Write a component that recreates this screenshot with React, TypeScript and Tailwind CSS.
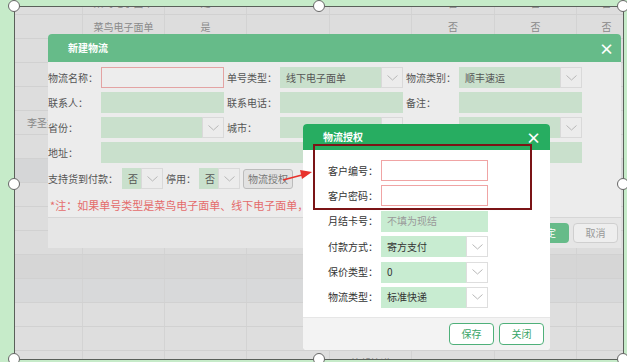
import React from "react";

const cols = [68, 82, 82, 83, 82, 83, 82, 60];

const rows: { bg: string; cells: string[] }[] = [
  { bg: "bg-[#dddddd]", cells: ["", "菜鸟电子面单", "是", "", "", "否", "否", "否"] },
  { bg: "bg-[#dddddd]", cells: ["", "菜鸟电子面单", "是", "", "", "否", "否", "否"] },
  { bg: "bg-[#dddddd]", cells: ["", "", "", "", "", "", "", ""] },
  { bg: "bg-[#dddddd]", cells: ["", "", "", "", "", "", "", ""] },
  { bg: "bg-[#dddddd]", cells: ["", "", "", "", "", "", "", ""] },
  { bg: "bg-[#dddddd]", cells: ["李圣杰", "", "", "", "", "", "", ""] },
  { bg: "bg-[#dddddd]", cells: ["", "", "", "", "", "", "", ""] },
  { bg: "bg-[#d5d6d7]", cells: ["", "", "", "", "", "", "", ""] },
  { bg: "bg-[#dddddd]", cells: ["", "", "", "", "", "", "", ""] },
  { bg: "bg-[#dddddd]", cells: ["", "", "", "", "", "", "", ""] },
  { bg: "bg-[#dcdcdc]", cells: ["", "", "", "", "", "", "", ""] },
  { bg: "bg-[#d6d6d6]", cells: ["", "", "", "", "", "", "", ""] },
  { bg: "bg-[#d8d9da]", cells: ["", "", "", "", "", "", "", ""] },
  { bg: "bg-[#dedede]", cells: ["", "", "", "", "", "", "", ""] },
  { bg: "bg-[#dedede]", cells: ["", "", "", "", "", "", "", ""] },
  { bg: "bg-[#dedede]", cells: ["", "", "", "", "德邦快递", "", "", ""] },
];

function Chev() {
  return (
    <svg width="11" height="6" viewBox="0 0 11 6">
      <polyline points="0.5,0.5 5.5,5 10.5,0.5" fill="none" stroke="#b8b8b8" strokeWidth="1" />
    </svg>
  );
}

// greyed dialog controls
function GInput({ w = 123, red = false }: { w?: number; red?: boolean }) {
  return red ? (
    <div className="h-[21px] border border-[#e3a3a3] bg-[#ededed]" style={{ width: w }} />
  ) : (
    <div className="h-[21px] bg-[#c9e0cc]" style={{ width: w }} />
  );
}

function GSelect({ v = "", w = 123 }: { v?: string; w?: number }) {
  return (
    <div className="flex h-[21px]" style={{ width: w }}>
      <div className="flex flex-1 items-center whitespace-nowrap bg-[#c9e0cc] pl-[6px] text-[#555]">{v}</div>
      <div className="flex w-[22px] items-center justify-center border border-[#d9d9d9] bg-[#ececec]">
        <Chev />
      </div>
    </div>
  );
}

function GLabel({ t, w = 50 }: { t: string; w?: number }) {
  return (
    <div className="shrink-0 whitespace-nowrap text-[#555]" style={{ width: w }}>
      {t}
    </div>
  );
}

// bright dialog controls
function Field({ label, children }: { label: string; children: React.ReactNode }) {
  return (
    <div className="flex h-[21px] items-center">
      <div className="w-[53px] shrink-0 whitespace-nowrap text-[#333]">{label}</div>
      {children}
    </div>
  );
}

function BSelect({ v }: { v: string }) {
  return (
    <div className="flex h-[21px] w-[107px]">
      <div className="flex flex-1 items-center bg-[#c8ecd1] pl-[6px] text-[#333]">{v}</div>
      <div className="flex w-[22px] items-center justify-center border border-[#dedede] bg-white">
        <Chev />
      </div>
    </div>
  );
}

function Handle({ x, y }: { x: number; y: number }) {
  return (
    <div
      className="absolute h-[12px] w-[12px] rounded-full border border-[#666] bg-white"
      style={{ left: x - 6, top: y - 6 }}
    />
  );
}

export default function App() {
  return (
    <div className="relative h-[362px] w-[627px] overflow-hidden bg-[#c6ebc9] font-['Noto_Sans_CJK_SC',sans-serif] text-[10px] leading-none">
      {/* framed screenshot with grey table */}
      <div className="absolute left-[14px] top-[6px] h-[354px] w-[610px] overflow-hidden border border-[#5a605a] bg-[#dddddd]">
        <div className="-mt-[16px] flex flex-col">
          {rows.map((r, i) => (
            <div key={i} className={`flex h-[24px] border-b border-[#d1d1d1] ${r.bg}`}>
              {r.cells.map((c, j) => (
                <div
                  key={j}
                  className={`flex shrink-0 items-center whitespace-nowrap border-r border-[#d3d3d3] text-[#8a8a8a] ${
                    j === 0 ? "justify-start pl-[12px]" : "justify-center"
                  }`}
                  style={{ width: cols[j] }}
                >
                  {c}
                </div>
              ))}
            </div>
          ))}
        </div>
      </div>

      {/* 新建物流 dialog */}
      <div className="absolute left-[48px] top-[34px] flex w-[573px] flex-col overflow-hidden rounded-t-[4px] bg-[#ececec]">
        <div className="flex h-[28px] items-center justify-between bg-[#66bb89] pl-[20px] pr-[7px] text-white">
          <span className="font-bold">新建物流</span>
          <span className="text-[15px] font-bold">×</span>
        </div>
        <div className="flex h-[155px] flex-col gap-[4px] pt-[5px]">
          <div className="flex items-center gap-[3px]">
            <GLabel t="物流名称：" />
            <GInput red />
            <GLabel t="单号类型：" />
            <GSelect v="线下电子面单" />
            <GLabel t="物流类别：" />
            <GSelect v="顺丰速运" />
          </div>
          <div className="flex items-center gap-[3px]">
            <GLabel t="联系人：" />
            <GInput />
            <GLabel t="联系电话：" />
            <GInput />
            <GLabel t="备注：" />
            <GInput />
          </div>
          <div className="flex items-center gap-[3px]">
            <GLabel t="省份：" />
            <GSelect />
            <GLabel t="城市：" />
            <GSelect />
            <GLabel t="" />
            <GSelect />
          </div>
          <div className="flex items-center gap-[3px]">
            <GLabel t="地址：" />
            <GInput w={481} />
          </div>
          <div className="mt-[1px] flex items-center gap-[3px]">
            <GLabel t="支持货到付款：" w={71} />
            <GSelect v="否" w={41} />
            <GLabel t="停用：" w={30} />
            <GSelect v="否" w={41} />
            <div className="flex h-[20px] items-center rounded-[3px] border border-[#bcbcbc] bg-[#e2e2e2] px-[4px] text-[#777]">
              物流授权
            </div>
          </div>
          <div className="mt-[7px] whitespace-nowrap pl-[2px] text-[11px] text-[#e46b6b]">
            *注：如果单号类型是菜鸟电子面单、线下电子面单，需要填写物流授权信息
          </div>
        </div>
        <div className="flex h-[31px] items-center justify-end gap-[4px] border-t border-[#d6d6d6] bg-[#e6e6e6] pr-[3px]">
          <div className="flex h-[20px] w-[46px] items-center justify-center rounded-[4px] bg-[#66bb89] text-white">
            确定
          </div>
          <div className="flex h-[20px] w-[45px] items-center justify-center rounded-[4px] border border-[#cfcfcf] bg-[#eeeeee] text-[#999]">
            取消
          </div>
        </div>
      </div>

      {/* 物流授权 dialog */}
      <div className="absolute left-[303px] top-[124px] flex w-[247px] flex-col overflow-hidden rounded-[4px] bg-white">
        <div className="flex h-[26px] items-center justify-between bg-[#27ad61] pl-[20px] pr-[9px] text-white">
          <span className="font-bold">物流授权</span>
          <span className="text-[15px] font-bold">×</span>
        </div>
        <div className="flex h-[167px] flex-col gap-[4.4px] pl-[25px] pt-[10px]">
          <Field label="客户编号：">
            <div className="h-[21px] w-[107px] border border-[#f0a4a4] bg-white" />
          </Field>
          <Field label="客户密码：">
            <div className="h-[21px] w-[107px] border border-[#f0a4a4] bg-white" />
          </Field>
          <Field label="月结卡号：">
            <div className="flex h-[21px] w-[107px] items-center bg-[#c8ecd1] pl-[6px] text-[#999]">不填为现结</div>
          </Field>
          <Field label="付款方式：">
            <BSelect v="寄方支付" />
          </Field>
          <Field label="保价类型：">
            <BSelect v="0" />
          </Field>
          <Field label="物流类型：">
            <BSelect v="标准快递" />
          </Field>
        </div>
        <div className="flex h-[33px] items-center justify-end gap-[5px] border-t border-[#e6e6e6] bg-[#f3f3f3] pr-[6px]">
          <div className="flex h-[22px] w-[45px] items-center justify-center rounded-[4px] border border-[#4fb07a] bg-white text-[#3aa567]">
            保存
          </div>
          <div className="flex h-[22px] w-[45px] items-center justify-center rounded-[4px] border border-[#4fb07a] bg-white text-[#3aa567]">
            关闭
          </div>
        </div>
      </div>

      {/* annotation */}
      <div className="absolute left-[313px] top-[144px] h-[66px] w-[219px] border-2 border-[#7b1416]" />
      <svg className="absolute left-0 top-0" width="627" height="362">
        <line x1="283" y1="180" x2="302" y2="175" stroke="#e8322c" strokeWidth="1.6" />
        <polygon points="312,172 300,170 302,179" fill="#e8322c" />
      </svg>

      {[
        [14, 6], [319, 6], [623, 6],
        [14, 184], [623, 184],
        [14, 359], [319, 359], [623, 359],
      ].map(([x, y], i) => (
        <Handle key={i} x={x} y={y} />
      ))}
    </div>
  );
}
